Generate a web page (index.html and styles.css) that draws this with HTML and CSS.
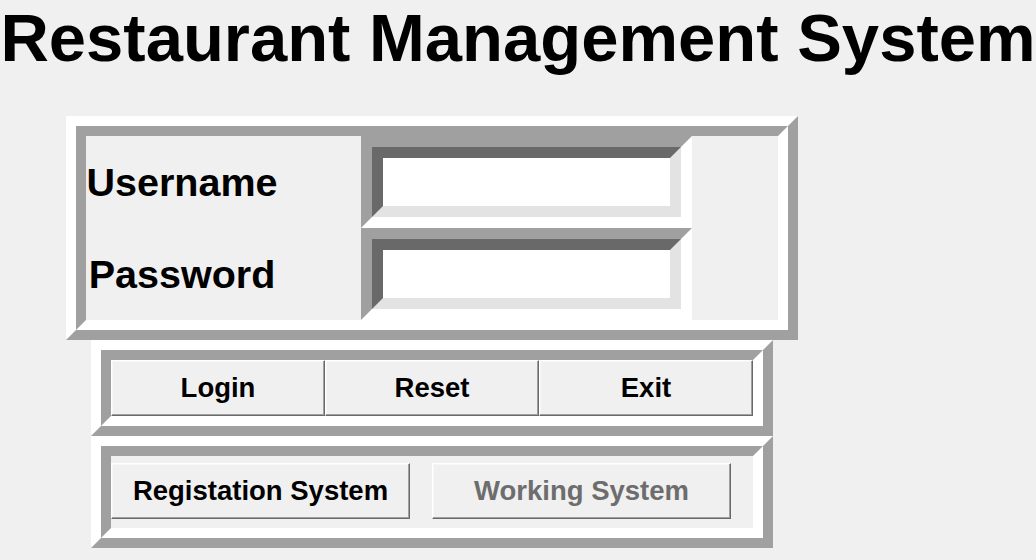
FILE: index.html
```html
<!DOCTYPE html>
<html>
<head>
<meta charset="utf-8">
<title>Restaurant Management System</title>
<link rel="stylesheet" href="styles.css">
</head>
<body>
<div class="title">Restaurant Management System</div>
<div class="main">
  <div class="frame f1">
    <div class="frame-in f1-in">
      <div class="lbl"><span class="lbl-box">Username</span></div>
      <div class="entry"><div class="entry-in"></div></div>
      <div class="spacer"></div>
      <div class="lbl"><span class="lbl-box">Password</span></div>
      <div class="entry"><div class="entry-in"></div></div>
      <div class="spacer"></div>
    </div>
  </div>
  <div class="frame f2">
    <div class="frame-in f2-in">
      <div class="btn">Login</div>
      <div class="btn">Reset</div>
      <div class="btn">Exit</div>
    </div>
  </div>
  <div class="frame f3">
    <div class="frame-in f3-in">
      <div class="btn wide">Registation System</div>
      <div class="btn wide disabled">Working System</div>
    </div>
  </div>
</div>
</body>
</html>
```

FILE: styles.css
```css
html, body {
  margin: 0;
  padding: 0;
  background: #f0f0f0;
}
body {
  font-family: "Liberation Sans", Arial, sans-serif;
  font-weight: bold;
  color: #000;
  width: 1036px;
  height: 560px;
  overflow: hidden;
}
.title {
  font-size: 67px;
  text-align: center;
  height: 116px;
  line-height: 76px;
  white-space: nowrap;
}
.main {
  margin-left: 66px;
  width: 732px;
  display: flex;
  flex-direction: column;
}
.frame {
  border-style: solid;
  border-width: 10px;
  border-color: #ffffff #a0a0a0 #a0a0a0 #ffffff;
}
.frame-in {
  border-style: solid;
  border-width: 10px;
  border-color: #a0a0a0 #ffffff #ffffff #a0a0a0;
  background: #f0f0f0;
}
.f1-in {
  display: grid;
  grid-template-columns: 275px 331px 86px;
  grid-template-rows: 92px 92px;
}
.lbl {
  display: flex;
  align-items: center;
  font-size: 39.5px;
}
.lbl-box {
  width: 192px;
  text-align: center;
}
.entry {
  border-style: solid;
  border-width: 11px;
  border-color: #a0a0a0 #ffffff #ffffff #a0a0a0;
}
.entry-in {
  height: 100%;
  box-sizing: border-box;
  border-style: solid;
  border-width: 11px;
  border-color: #696969 #e3e3e3 #e3e3e3 #696969;
  background: #ffffff;
}
.f2, .f3 {
  margin-left: 25px;
  width: 662px;
}
.f2-in {
  display: grid;
  grid-template-columns: 214px 214px 214px;
  height: 56px;
}
.f3-in {
  display: flex;
  height: 65px;
  padding-top: 7px;
  gap: 22px;
}
.btn {
  box-sizing: border-box;
  height: 56px;
  display: flex;
  align-items: center;
  justify-content: center;
  font-size: 27.5px;
  border: 1px solid;
  border-color: #ffffff #696969 #696969 #ffffff;
  box-shadow: inset -1px -1px 0 #a0a0a0, inset 1px 1px 0 #f7f7f7;
  background: #f0f0f0;
}
.wide {
  width: 299px;
}
.disabled {
  color: #6d6d6d;
}
```
